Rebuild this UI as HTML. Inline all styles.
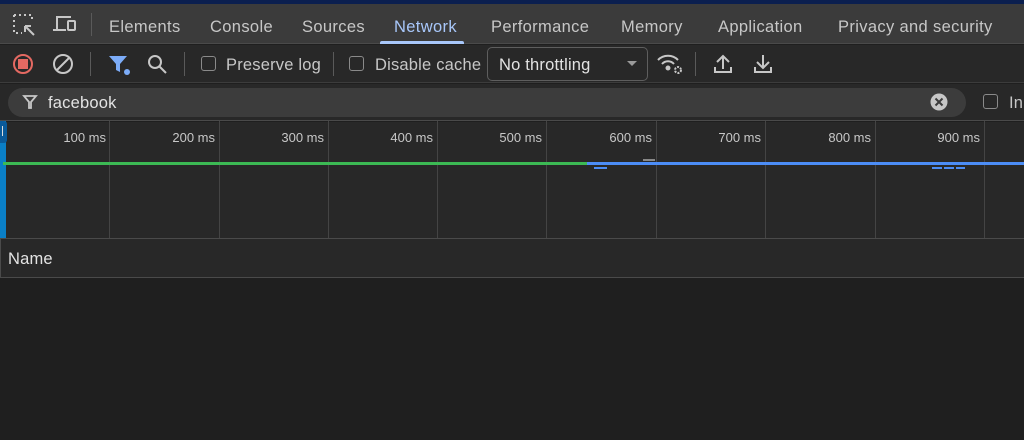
<!DOCTYPE html>
<html><head><meta charset="utf-8"><style>
*{margin:0;padding:0;box-sizing:border-box}
body{width:1024px;height:440px;overflow:hidden;background:#1f1f1f;font-family:"Liberation Sans",sans-serif;color:#e3e3e3;position:relative}
.a{position:absolute}
.tab{position:absolute;top:18px;font-size:16.5px;color:#c7c7c7;letter-spacing:0.35px}
.t2{position:absolute;font-size:16.5px;color:#c7c7c7;letter-spacing:0.2px}
.sep{position:absolute;width:1px;background:#5a5a5a}
.ms{position:absolute;top:130px;font-size:13px;color:#c7c7c7;text-align:right;width:80px}
.gl{position:absolute;width:1px;background:#444;top:121px;height:117px}
.cb{position:absolute;width:15px;height:15px;border:1.5px solid #8a8a8a;border-radius:3px}
</style></head><body>
<div class="a" style="left:0;top:0;width:1024px;height:4px;background:#0b1f4f"></div>
<div class="a" style="left:0;top:4px;width:1024px;height:40px;background:#3b3b3b;border-bottom:1px solid #4a4a4a"></div>
<svg class="a" style="left:12px;top:13px" width="24" height="24" viewBox="0 0 24 24" fill="none" stroke="#c7c7c7" stroke-width="2"><path d="M2 2h18v6M2 2v18h8" stroke-dasharray="2 3"/><path d="M22 22l-9-9M13 13h6M13 13v6"/></svg>
<svg class="a" style="left:51px;top:13px" width="27" height="22" viewBox="0 0 27 22" fill="none" stroke="#c7c7c7" stroke-width="2"><path d="M6 16V4h14M2 17h13"/><rect x="17" y="8" width="7" height="9" rx="1"/></svg>
<div class="sep" style="left:91px;top:13px;height:23px"></div>
<div class="tab" style="left:109px">Elements</div>
<div class="tab" style="left:210px">Console</div>
<div class="tab" style="left:302px">Sources</div>
<div class="tab" style="left:394px;color:#a8c7fa">Network</div>
<div class="a" style="left:380px;top:41px;width:84px;height:3px;background:#a8c7fa;border-radius:2px 2px 0 0"></div>
<div class="tab" style="left:491px">Performance</div>
<div class="tab" style="left:621px">Memory</div>
<div class="tab" style="left:718px">Application</div>
<div class="tab" style="left:838px">Privacy and security</div>
<div class="a" style="left:0;top:45px;width:1024px;height:38px;background:#282828;border-bottom:1px solid #3c3c3c"></div>
<svg class="a" style="left:12px;top:53px" width="22" height="22"><circle cx="11" cy="11" r="9" fill="none" stroke="#e46962" stroke-width="2"/><rect x="6" y="6" width="10" height="10" fill="#e46962"/></svg>
<svg class="a" style="left:52px;top:53px" width="22" height="22"><circle cx="11" cy="11" r="9" fill="none" stroke="#c7c7c7" stroke-width="2"/><path d="M5 17L17 5" stroke="#c7c7c7" stroke-width="2"/></svg>
<div class="sep" style="left:90px;top:52px;height:24px"></div>
<svg class="a" style="left:108px;top:54px" width="24" height="22"><path d="M1 2h18l-7 8v8l-4-2v-6z" fill="#7cacf8"/><circle cx="19" cy="18" r="3" fill="#7cacf8"/></svg>
<svg class="a" style="left:146px;top:53px" width="22" height="22" fill="none" stroke="#c7c7c7" stroke-width="2"><circle cx="9" cy="9" r="6"/><path d="M13.5 13.5L20 20"/></svg>
<div class="sep" style="left:184px;top:52px;height:24px"></div>
<div class="cb" style="left:201px;top:56px"></div>
<div class="t2" style="left:226px;top:56px">Preserve log</div>
<div class="sep" style="left:333px;top:52px;height:24px"></div>
<div class="cb" style="left:349px;top:56px"></div>
<div class="t2" style="left:375px;top:56px">Disable cache</div>
<div class="a" style="left:487px;top:47px;width:161px;height:34px;border:1px solid #5e5e5e;border-radius:5px"></div>
<div class="t2" style="left:499px;top:56px;color:#e3e3e3">No throttling</div>
<div class="a" style="left:627px;top:61px;width:0;height:0;border-left:5px solid transparent;border-right:5px solid transparent;border-top:5px solid #9a9a9a"></div>
<svg class="a" style="left:656px;top:52px" width="28" height="24" fill="none" stroke="#c7c7c7" stroke-width="2"><path d="M2 8a14 14 0 0 1 20 0M6 12a8 8 0 0 1 12 0"/><circle cx="12" cy="16" r="1.5" fill="#c7c7c7"/><circle cx="22" cy="18" r="3" stroke-width="2" stroke-dasharray="2 1.2"/></svg>
<div class="sep" style="left:695px;top:52px;height:24px"></div>
<svg class="a" style="left:712px;top:52px" width="22" height="24" fill="none" stroke="#c7c7c7" stroke-width="2"><path d="M11 17V4M5 10l6-6 6 6M3 15v5h16v-5"/></svg>
<svg class="a" style="left:752px;top:52px" width="22" height="24" fill="none" stroke="#c7c7c7" stroke-width="2"><path d="M11 3v13M5 10l6 6 6-6M3 15v5h16v-5"/></svg>
<div class="a" style="left:0;top:84px;width:1024px;height:37px;background:#282828;border-bottom:1px solid #4a4a4a"></div>
<div class="a" style="left:8px;top:88px;width:958px;height:29px;background:#3c3c3c;border-radius:15px"></div>
<svg class="a" style="left:22px;top:94px" width="16" height="16" fill="none" stroke="#c7c7c7" stroke-width="1.8"><path d="M2 2h12l-5 6v6h-2v-6z"/></svg>
<div class="t2" style="left:48px;top:94px;color:#e3e3e3">facebook</div>
<svg class="a" style="left:930px;top:93px" width="18" height="18"><circle cx="9" cy="9" r="8.5" fill="#c7c7c7"/><path d="M5.5 5.5l7 7M12.5 5.5l-7 7" stroke="#3c3c3c" stroke-width="2"/></svg>
<div class="cb" style="left:983px;top:94px"></div>
<div class="t2" style="left:1009px;top:94px">In</div>
<div class="a" style="left:0;top:122px;width:1024px;height:116px;background:#282828"></div>
<div class="gl" style="left:109px"></div><div class="gl" style="left:219px"></div><div class="gl" style="left:328px"></div><div class="gl" style="left:437px"></div><div class="gl" style="left:546px"></div><div class="gl" style="left:656px"></div><div class="gl" style="left:765px"></div><div class="gl" style="left:875px"></div><div class="gl" style="left:984px"></div>
<div class="ms" style="left:26px">100 ms</div><div class="ms" style="left:135px">200 ms</div><div class="ms" style="left:244px">300 ms</div><div class="ms" style="left:353px">400 ms</div><div class="ms" style="left:462px">500 ms</div><div class="ms" style="left:572px">600 ms</div><div class="ms" style="left:681px">700 ms</div><div class="ms" style="left:791px">800 ms</div><div class="ms" style="left:900px">900 ms</div>
<div class="a" style="left:0;top:121px;width:6px;height:117px;background:#0a7fc7"></div>
<div class="a" style="left:0;top:121px;width:7px;height:22px;background:#0a5a9a;border-radius:0 3px 3px 0"></div>
<div class="a" style="left:2px;top:126px;width:1px;height:10px;background:#ddd"></div>
<div class="a" style="left:3px;top:162px;width:584px;height:3px;background:#3cba54"></div>
<div class="a" style="left:587px;top:162px;width:437px;height:3px;background:#4c8df6"></div>
<div class="a" style="left:643px;top:159px;width:12px;height:2px;background:#888"></div>
<div class="a" style="left:594px;top:167px;width:13px;height:2px;background:#4c8df6"></div>
<div class="a" style="left:932px;top:167px;width:33px;height:2px;background:repeating-linear-gradient(90deg,#4c8df6 0 10px,transparent 10px 12px)"></div>
<div class="a" style="left:0;top:238px;width:1024px;height:40px;background:#282828;border-top:1px solid #4a4a4a;border-bottom:1px solid #4a4a4a;border-left:1px solid #4a4a4a"></div>
<div class="t2" style="left:8px;top:250px;color:#e3e3e3">Name</div>
</body></html>
